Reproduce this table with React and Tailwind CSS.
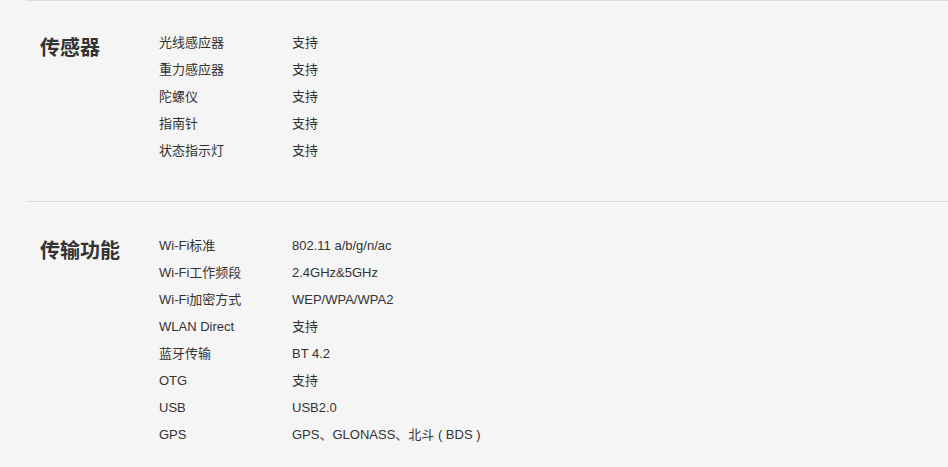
const sections = [
  {
    title: '传感器',
    pad: 'pt-[28px] pb-[37px]',
    rows: [
      ['光线感应器', '支持'],
      ['重力感应器', '支持'],
      ['陀螺仪', '支持'],
      ['指南针', '支持'],
      ['状态指示灯', '支持'],
    ],
  },
  {
    title: '传输功能',
    pad: 'pt-[30px] pb-[37px]',
    rows: [
      ['Wi-Fi标准', '802.11 a/b/g/n/ac'],
      ['Wi-Fi工作频段', '2.4GHz&5GHz'],
      ['Wi-Fi加密方式', 'WEP/WPA/WPA2'],
      ['WLAN Direct', '支持'],
      ['蓝牙传输', 'BT 4.2'],
      ['OTG', '支持'],
      ['USB', 'USB2.0'],
      ['GPS', 'GPS、GLONASS、北斗 ( BDS )'],
    ],
  },
]

export default function App() {
  return (
    <div
      className="min-h-screen bg-[#f5f5f5] text-[#333]"
      style={{ fontFamily: '"Liberation Sans", "Noto Sans CJK SC", sans-serif' }}
    >
      <div className="ml-[26px]">
        {sections.map((section) => (
          <section
            key={section.title}
            className={`flex border-t border-[#dcdcdc] pl-[14px] ${section.pad}`}
          >
            {/* Section heading */}
            <h2 className="w-[119px] shrink-0 pt-px text-[20px] font-bold leading-[36px] text-[#333]">
              {section.title}
            </h2>

            {/* Spec rows */}
            <dl className="grid grid-cols-[133px_1fr] text-[13px] leading-[27px]">
              {section.rows.map(([label, value]) => (
                <div key={label} className="contents">
                  <dt>{label}</dt>
                  <dd className="whitespace-pre">{value}</dd>
                </div>
              ))}
            </dl>
          </section>
        ))}
      </div>
    </div>
  )
}
